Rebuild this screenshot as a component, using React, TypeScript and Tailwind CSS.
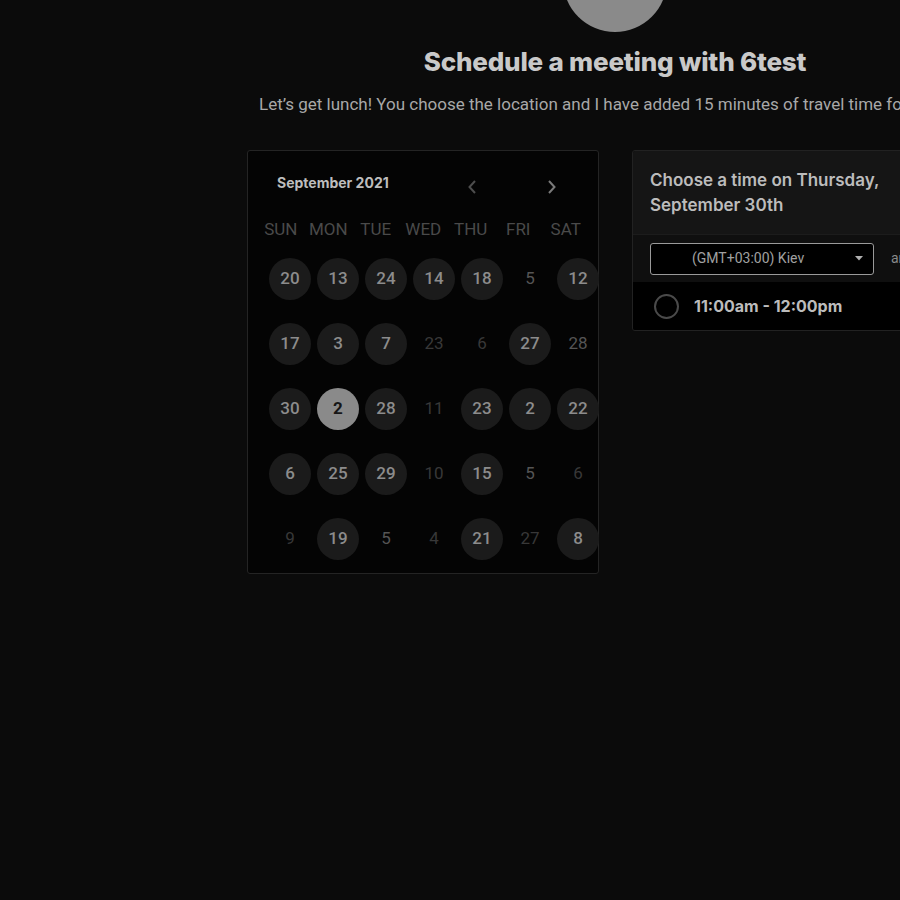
type Day = { n: number; kind: "open" | "plain" | "dim" | "selected" };

const o = (n: number): Day => ({ n, kind: "open" });
const p = (n: number): Day => ({ n, kind: "plain" });
const d = (n: number): Day => ({ n, kind: "dim" });
const s = (n: number): Day => ({ n, kind: "selected" });

const weekdays = ["SUN", "MON", "TUE", "WED", "THU", "FRI", "SAT"];

const weeks: Day[][] = [
  [o(20), o(13), o(24), o(14), o(18), p(5), o(12)],
  [o(17), o(3), o(7), d(23), d(6), o(27), p(28)],
  [o(30), s(2), o(28), d(11), o(23), o(2), o(22)],
  [o(6), o(25), o(29), d(10), o(15), p(5), d(6)],
  [d(9), o(19), p(5), d(4), o(21), d(27), o(8)],
];

function DayCell({ day }: { day: Day }) {
  if (day.kind === "open") {
    return (
      <div className="w-[42px] h-[42px] rounded-full bg-[#1b1b1b] flex items-center justify-center text-[17px] font-medium text-[#8c8c8c]">
        {day.n}
      </div>
    );
  }
  if (day.kind === "selected") {
    return (
      <div className="w-[42px] h-[42px] rounded-full bg-[#8a8a8a] flex items-center justify-center text-[17px] font-bold text-[#161616]">
        {day.n}
      </div>
    );
  }
  return (
    <div
      className={`w-[42px] h-[42px] flex items-center justify-center text-[17px] ${
        day.kind === "plain" ? "text-[#555555]" : "text-[#383838]"
      }`}
    >
      {day.n}
    </div>
  );
}

function Calendar() {
  return (
    <div className="w-[352px] h-[424px] shrink-0 rounded-[3px] border border-[#242424] bg-[#040404] font-['Roboto',sans-serif]">
      <div className="flex items-center h-[66px] pl-[29px]">
        <span className="w-[183px] mt-[-4px] text-[14px] font-bold text-[#bdbdbd] font-['Inter',sans-serif]">
          September 2021
        </span>
        <div className="flex items-center gap-[64px] mt-[6px] ml-[6px]">
          <svg width="14" height="16" viewBox="0 0 14 16" fill="none">
            <path d="M9 2 L3.5 8 L9 14" stroke="#4d4d4d" strokeWidth="2" />
          </svg>
          <svg width="14" height="16" viewBox="0 0 14 16" fill="none">
            <path d="M5 2 L10.5 8 L5 14" stroke="#7a7a7a" strokeWidth="2" />
          </svg>
        </div>
      </div>
      <div className="grid grid-cols-[repeat(7,47.5px)] pl-[9px] h-[26px] items-center">
        {weekdays.map((w) => (
          <div key={w} className="text-center text-[17px] text-[#4a4a4a]">
            {w}
          </div>
        ))}
      </div>
      <div className="pl-[18px] pt-[3px]">
        {weeks.map((week, wi) => (
          <div key={wi} className="grid grid-cols-[repeat(7,48px)] h-[65px] items-center">
            {week.map((day, di) => (
              <div key={di} className="flex justify-center">
                <DayCell day={day} />
              </div>
            ))}
          </div>
        ))}
      </div>
    </div>
  );
}

function TimePanel() {
  return (
    <div className="w-[560px] shrink-0 self-start rounded-[3px] border border-[#222222] overflow-hidden">
      <div className="h-[83px] bg-[#151515] px-[17px] pt-[17px] text-[17px] leading-[25px] font-semibold text-[#bcbcbc] font-['Inter',sans-serif]">
        Choose a time on Thursday,
        <br />
        September 30th
      </div>
      <div className="h-[48px] bg-[#0f0f0f] border-t border-[#1c1c1c] flex items-center pl-[17px] gap-[17px] font-['Roboto',sans-serif]">
        <div className="w-[224px] h-[32px] rounded-[3px] border border-[#9a9a9a] bg-black flex items-center pl-[41px] pr-[10px]">
          <span className="flex-1 text-[14px] text-[#a0a0a0]">(GMT+03:00) Kiev</span>
          <svg width="8" height="5" viewBox="0 0 8 5">
            <path d="M0 0 H8 L4 4.5 Z" fill="#b0b0b0" />
          </svg>
        </div>
        <span className="text-[14px] text-[#8a8a8a]">and show times in 12h format</span>
      </div>
      <div className="h-[48px] bg-black flex items-center pl-[21px] gap-[15px]">
        <div className="w-[25px] h-[25px] rounded-full border-2 border-[#4a4a4a]" />
        <span className="text-[16px] font-bold text-[#bcbcbc] font-['Inter',sans-serif]">
          11:00am - 12:00pm
        </span>
      </div>
    </div>
  );
}

export default function App() {
  return (
    <div className="w-full h-[900px] overflow-hidden bg-[#0b0b0b]">
      <div className="w-[1230px] flex flex-col items-center">
        <div className="w-[104px] h-[104px] rounded-full bg-[#8a8a8a] mt-[-72px]" />
        <h1 className="mt-[14px] h-[32px] leading-[32px] text-[26px] font-extrabold tracking-[-0.2px] text-[#c9c9c9] font-['Inter',sans-serif]">
          Schedule a meeting with 6test
        </h1>
        <p className="self-start pl-[259px] mt-[14px] leading-[24px] text-[17px] whitespace-nowrap text-[#a8a8a8] font-['Roboto',sans-serif]">
          Let’s get lunch! You choose the location and I have added 15 minutes of travel time for you.
        </p>
        <div className="self-start ml-[247px] mt-[34px] flex gap-[33px]">
          <Calendar />
          <TimePanel />
        </div>
      </div>
    </div>
  );
}
